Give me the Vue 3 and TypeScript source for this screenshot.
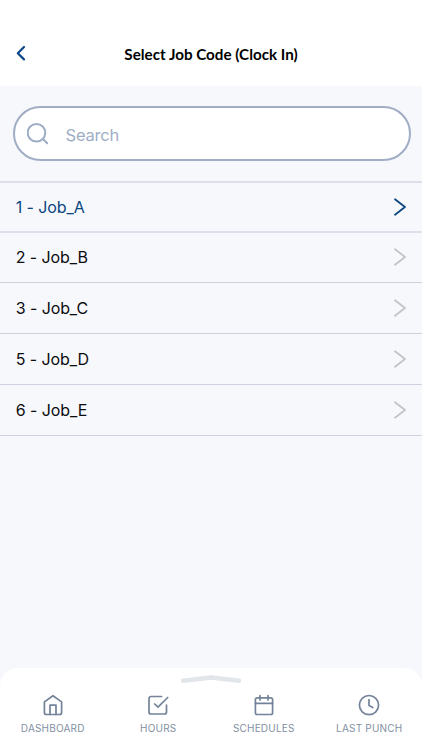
<script setup lang="ts">
import { ref } from 'vue'

interface Job {
  code: number
  name: string
}

interface Tab {
  label: string
  paths: string[]
}

const jobs: Job[] = [
  { code: 1, name: 'Job_A' },
  { code: 2, name: 'Job_B' },
  { code: 3, name: 'Job_C' },
  { code: 5, name: 'Job_D' },
  { code: 6, name: 'Job_E' },
]

const selected = ref(1)
const query = ref('')

const tabs: Tab[] = [
  {
    label: 'DASHBOARD',
    paths: [
      'M2.4 7.900 11 1.700l8.600 6.200V18.500a2 2 0 0 1-2 2H4.400a2 2 0 0 1-2-2z',
      'M8 20.500V11.200h6v9.300',
    ],
  },
  {
    label: 'HOURS',
    paths: [
      'M19.500 11V18a2 2 0 0 1-2 2H4a2 2 0 0 1-2-2V4.500a2 2 0 0 1 2-2H14.500',
      'M7.700 10l3.300 3.200L20.700 3.500',
    ],
  },
  {
    label: 'SCHEDULES',
    paths: [
      'M4.200 3.800h13.600a1.800 1.800 0 0 1 1.800 1.800v13.100a1.800 1.800 0 0 1-1.800 1.800h-13.600a1.800 1.800 0 0 1-1.800-1.800v-13.100a1.800 1.800 0 0 1 1.800-1.800z',
      'M7 1.500v4.500M15 1.500v4.500M2.400 9.300h17.200',
    ],
  },
  {
    label: 'LAST PUNCH',
    paths: [
      'M11 1.500a9.600 9.600 0 1 1 0 19.200a9.600 9.600 0 1 1 0-19.200z',
      'M11 5.500V11.500l3.800 2',
    ],
  },
]
</script>

<template>
  <div class="screen">
    <header class="header">
      <button class="back" aria-label="Back">
        <svg width="12" height="18" viewBox="0 0 12 18">
          <path d="M9 2 2.800 8.200 9 14.400" />
        </svg>
      </button>
      <h1 class="title">Select Job Code (Clock In)</h1>
    </header>

    <main class="content">
      <label class="search">
        <svg class="search-icon" width="24" height="24" viewBox="0 0 24 24">
          <circle cx="9.500" cy="10.700" r="8.800" />
          <path d="M15.900 17l4.300 4.300" />
        </svg>
        <input v-model="query" class="search-input" type="text" placeholder="Search" />
      </label>

      <ul class="jobs">
        <li
          v-for="job in jobs"
          :key="job.code"
          class="job"
          :class="{ active: job.code === selected }"
          @click="selected = job.code"
        >
          <span>{{ job.code }} - {{ job.name }}</span>
          <svg class="chevron" width="14" height="20" viewBox="0 0 14 20">
            <path d="M2 2.200 12 10 2 17.800" />
          </svg>
        </li>
      </ul>
    </main>

    <nav class="tabbar">
      <svg class="handle" width="64" height="10" viewBox="0 0 64 10">
        <path d="M4 6.700 32 3.500 60 6.700" />
      </svg>
      <div class="tabs">
        <a v-for="tab in tabs" :key="tab.label" class="tab">
          <svg class="tab-icon" width="22" height="22" viewBox="0 0 22 22">
            <path v-for="d in tab.paths" :key="d" :d="d" />
          </svg>
          <span>{{ tab.label }}</span>
        </a>
      </div>
    </nav>
  </div>
</template>

<style>
body {
  margin: 0;
  background: #f7f8fc;
}
</style>

<style scoped>
.screen {
  display: flex;
  flex-direction: column;
  height: 750px;
  overflow: hidden;
  background: #f7f8fc;
  font-family: Inter, "Liberation Sans", sans-serif;
}

svg {
  flex: none;
  fill: none;
  stroke: currentColor;
  stroke-linecap: round;
  stroke-linejoin: round;
}

.header {
  display: grid;
  grid-template-columns: 42px 1fr 42px;
  align-items: center;
  box-sizing: border-box;
  height: 86px;
  padding-top: 22px;
  background: #fff;
}

.back {
  display: flex;
  justify-content: center;
  padding: 0;
  border: 0;
  background: none;
  color: #0d4785;
}

.back svg {
  stroke-width: 2.2;
}

.title {
  margin: 0;
  color: #000;
  font: 700 15.200px/20px Lato, sans-serif;
  text-align: center;
}

.content {
  flex: 1;
}

.search {
  display: flex;
  align-items: center;
  gap: 15px;
  box-sizing: border-box;
  height: 55px;
  margin: 20px 11px 0 12.500px;
  padding: 0 24px 0 12px;
  border: 2px solid #a0adc5;
  border-radius: 28px;
  background: #fff;
}

.search-icon {
  color: #9dadc4;
  stroke-width: 2;
}

.search-input {
  flex: 1;
  min-width: 0;
  padding: 2px 0 0;
  border: 0;
  outline: 0;
  background: none;
  color: #0f1116;
  font: 400 16.500px/22px Inter, sans-serif;
  letter-spacing: -0.2px;
}

.search-input::placeholder {
  color: #a0aec6;
  opacity: 1;
}

.jobs {
  margin: 20px 0 0;
  padding: 0;
  border-top: 2px solid #dde0ea;
  list-style: none;
}

.job {
  display: flex;
  align-items: center;
  justify-content: space-between;
  box-sizing: border-box;
  height: 51px;
  padding: 0 15px 0 15.800px;
  border-bottom: 1px solid #cfd2de;
  color: #0b0c0f;
  font-size: 16px;
  line-height: 22px;
  letter-spacing: -0.1px;
}

.job:first-child {
  height: 50px;
  border-bottom: 2px solid #dde0ea;
}

.job:nth-child(2) {
  height: 50px;
  padding-bottom: 1px;
}

.job.active {
  color: #0d4780;
}

.chevron {
  color: #c3c4c9;
  stroke-width: 1.8;
}

.active .chevron {
  color: #0d4780;
}

.tabbar {
  display: flex;
  flex-direction: column;
  align-items: center;
  height: 82px;
  border-radius: 18px 18px 0 0;
  background: #fff;
}

.handle {
  margin-top: 6px;
  color: #e2e6ea;
  stroke-width: 4.500;
}

.tabs {
  display: grid;
  grid-template-columns: repeat(4, 1fr);
  width: 100%;
  margin-top: 10px;
}

.tab {
  display: flex;
  flex-direction: column;
  align-items: center;
  gap: 5px;
  color: #8290a4;
  font-size: 10px;
  line-height: 14px;
  letter-spacing: 0.2px;
}

.tab-icon {
  color: #74839a;
  stroke-width: 1.7;
}
</style>
